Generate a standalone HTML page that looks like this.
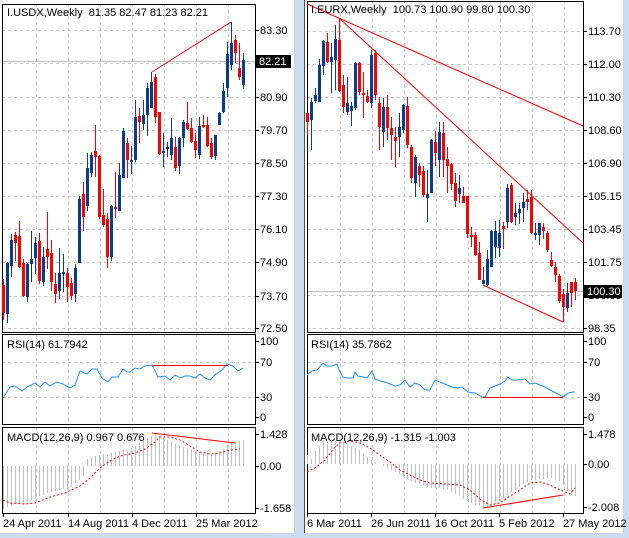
<!DOCTYPE html>
<html><head><meta charset="utf-8">
<style>
html,body{margin:0;padding:0;background:#c9dcf0;}
svg{display:block}
text{font-family:"Liberation Sans","DejaVu Sans",sans-serif;font-size:11px;fill:#000}
</style></head>
<body>
<svg id="s" width="629" height="538" xmlns="http://www.w3.org/2000/svg"></svg>
<script>
var s='';
function R(x,y,w,h,f,st){s+='<rect x="'+x+'" y="'+y+'" width="'+w+'" height="'+h+'" fill="'+f+'"'+(st?' stroke="'+st+'" shape-rendering="crispEdges"':'')+'/>';}
function L(x1,y1,x2,y2,c,d,w){s+='<line x1="'+x1+'" y1="'+y1+'" x2="'+x2+'" y2="'+y2+'" stroke="'+c+'" stroke-width="'+(w||1)+'"'+(d?' stroke-dasharray="'+d+'"':'')+'/>';}
function T(x,y,t,a,c){s+='<text x="'+x+'" y="'+y+'"'+(a?' text-anchor="'+a+'"':'')+(c?' style="fill:'+c+'"':'')+'>'+t+'</text>';}
function P(pts,c,d,w){s+='<polyline fill="none" points="'+pts.map(function(p){return p.join(',')}).join(' ')+'" stroke="'+c+'" stroke-width="'+(w||1)+'"'+(d?' stroke-dasharray="'+d+'"':'')+'/>';}
var G='#c8c8c8',DS='3,3',RED='#ff0000',BLU='#0a3c96';
// backgrounds
R(0,0,629,538,'#c9dcf0');
R(0,0,294,533,'#ffffff');
R(304,0,319,533,'#ffffff');
L(294.5,0,294.5,533,'#d0d0d0');L(623.5,0,623.5,533,'#d0d0d0');L(304.5,0,304.5,533,'#505050');
function panes(x0,x1,top,hl,vl,labels,dates,dx){
  // main
  hl.forEach(function(y){L(x0,y+.5,x1,y+.5,G,DS);});
  vl.forEach(function(x){L(x+.5,top,x+.5,332,G,DS);L(x+.5,334,x+.5,424,G,DS);L(x+.5,427,x+.5,513,G,DS);});
  L(x0,362.5,x1,362.5,G,DS);L(x0,397.5,x1,397.5,G,DS);
  R(x0+.5,top+.5,x1-x0,332-top,'none','#000');
  R(x0+.5,334.5,x1-x0,90,'none','#000');
  R(x0+.5,427.5,x1-x0,86,'none','#000');
  labels.forEach(function(l){L(x1+1,l[0]+.5,x1+4,l[0]+.5,'#000');T(x1+5,l[0]+4,l[1]);});
  dates.forEach(function(d){L(d[0]+.5,513,d[0]+.5,517,'#000');T(d[0],527,d[1]);});
}
panes(2,255,4,[30,63,97,130,163,196,229,262,296,328],[36,68,100,132,164,196,228],
 [[30,'83.30'],[63,'82.10'],[97,'80.90'],[130,'79.70'],[163,'78.50'],[196,'77.30'],[229,'76.10'],[262,'74.90'],[296,'73.70'],[328,'72.50'],
  [341,'100'],[362,'70'],[397,'30'],[417,'0'],[434,'1.428'],[466,'0.00'],[508,'-1.658']],
 [[3,'24 Apr 2011'],[68,'14 Aug 2011'],[132,'4 Dec 2011'],[196,'25 Mar 2012']]);
panes(307,583,1,[31,64,97,130,163,196,229,262,295,328],[340,372,404,436,468,500,532,564],
 [[31,'113.70'],[64,'112.00'],[97,'110.30'],[130,'108.60'],[163,'106.90'],[196,'105.15'],[229,'103.45'],[262,'101.75'],[295,'100.05'],[328,'98.35'],
  [341,'100'],[362,'70'],[397,'30'],[417,'0'],[434,'1.478'],[464,'0.00'],[507,'-2.008']],
 [[307,'6 Mar 2011'],[371,'26 Jun 2011'],[435,'16 Oct 2011'],[499,'5 Feb 2012'],[563,'27 May 2012']]);
// current price lines
L(3,61.5,255,61.5,'#c0c0c0');L(308,291.5,583,291.5,'#c0c0c0');
// candles: [x, wickTop, wickBot, bodyTop, bodyBot, color]
var lc=[[3,279,320,285,313,'r'],[7,262,323,263,314,'b'],[11,234,277,240,266,'b'],[15,232,261,235,243,'r'],[19,221,268,236,267,'r'],[23,259,297,263,296,'r'],[27,263,302,264,297,'b'],[31,231,282,259,264,'b'],[35,237,274,243,258,'b'],[39,233,284,241,281,'r'],[43,247,286,257,282,'b'],[47,212,269,249,257,'r'],[51,240,291,253,282,'r'],[55,273,303,284,294,'r'],[59,248,299,273,291,'b'],[63,254,292,272,274,'b'],[67,268,302,273,287,'r'],[71,278,300,283,296,'r'],[75,264,302,268,294,'b'],[79,196,263,199,263,'b'],[83,182,231,194,217,'r'],[87,153,211,168,206,'b'],[91,152,177,155,173,'b'],[95,125,177,151,157,'r'],[99,155,219,156,217,'r'],[103,189,227,215,225,'r'],[107,213,268,219,257,'r'],[111,205,261,206,257,'b'],[115,172,218,207,209,'r'],[119,163,211,175,211,'b'],[123,128,178,131,178,'b'],[127,138,178,143,160,'r'],[131,146,174,160,162,'b'],[135,100,162,117,160,'b'],[139,108,143,116,122,'r'],[143,100,130,115,124,'b'],[147,83,136,88,115,'b'],[151,72,108,82,108,'b'],[155,74,123,77,117,'r'],[159,112,155,112,154,'r'],[163,133,167,151,153,'b'],[167,142,157,147,149,'b'],[171,118,160,138,155,'b'],[175,137,171,147,168,'r'],[179,137,174,138,166,'b'],[183,120,147,122,138,'b'],[187,102,130,123,129,'r'],[191,118,143,128,142,'r'],[195,133,158,141,150,'r'],[199,117,159,126,155,'b'],[203,115,128,125,127,'r'],[207,117,147,125,146,'r'],[211,138,159,143,157,'r'],[215,135,160,135,156,'b'],[219,112,125,113,125,'b'],[223,83,113,91,112,'b'],[227,42,97,54,88,'b'],[231,22,70,43,65,'b'],[235,35,63,40,53,'r'],[239,43,80,68,77,'r'],[243,53,89,60,85,'b']];
var rc=[[307,112,135,113,122,'r'],[311,98,150,102,120,'b'],[315,88,103,95,101,'b'],[319,59,102,65,102,'b'],[323,40,75,41,66,'b'],[327,33,63,42,62,'r'],[331,43,93,57,62,'b'],[335,25,90,39,60,'b'],[339,18,92,40,91,'r'],[343,75,113,85,107,'r'],[347,77,115,103,112,'b'],[351,102,126,106,111,'b'],[355,62,110,63,108,'b'],[359,62,95,63,92,'r'],[363,72,118,93,95,'r'],[367,90,103,96,102,'r'],[371,50,108,55,103,'b'],[375,50,100,53,95,'r'],[379,97,150,103,127,'r'],[383,98,147,107,132,'b'],[387,95,140,107,128,'r'],[391,117,160,128,135,'r'],[395,127,167,137,141,'r'],[399,113,157,127,137,'b'],[403,104,133,105,130,'b'],[407,97,148,106,145,'r'],[411,145,183,147,178,'r'],[415,155,197,157,183,'b'],[419,163,187,166,175,'r'],[423,166,197,171,195,'r'],[427,170,222,194,198,'b'],[431,139,193,140,193,'b'],[435,131,166,142,153,'r'],[439,122,177,132,160,'b'],[443,122,177,133,160,'r'],[447,147,193,159,166,'r'],[451,163,190,164,184,'r'],[455,173,207,183,201,'r'],[459,175,203,188,194,'b'],[463,187,203,196,203,'r'],[467,196,238,196,234,'r'],[471,227,247,235,237,'r'],[475,232,256,235,255,'r'],[479,242,280,253,280,'r'],[483,267,284,280,284,'b'],[487,250,286,259,285,'b'],[491,230,267,231,267,'b'],[495,221,258,231,247,'b'],[499,220,257,233,248,'b'],[503,222,249,226,229,'r'],[507,184,228,188,222,'b'],[511,183,223,185,222,'r'],[515,203,225,213,217,'b'],[519,203,224,209,213,'b'],[523,193,222,202,208,'b'],[527,190,210,199,202,'r'],[531,190,234,197,233,'r'],[535,223,240,233,235,'b'],[539,223,245,223,235,'b'],[543,223,239,227,231,'r'],[547,231,252,233,250,'r'],[551,252,267,260,266,'r'],[555,262,282,267,275,'r'],[559,274,303,276,301,'r'],[563,289,322,294,307,'r'],[567,283,312,293,308,'b'],[571,282,307,282,293,'r'],[575,278,300,282,291,'r']];
function candles(a){a.forEach(function(c){var col=c[5]=='r'?RED:BLU;
  s+='<rect x="'+(c[0])+'" y="'+c[1]+'" width="1" height="'+(c[2]-c[1])+'" fill="'+col+'"/>';
  if(c[5]=='r'){s+='<rect x="'+(c[0]-.5)+'" y="'+(c[3]+.5)+'" width="2" height="'+Math.max(1,c[4]-c[3]-1)+'" fill="none" stroke="'+RED+'"/>';}
  else s+='<rect x="'+(c[0]-1)+'" y="'+c[3]+'" width="3" height="'+Math.max(1,c[4]-c[3])+'" fill="'+BLU+'"/>';
});}
candles(lc);candles(rc);
// trendlines
L(152,72,231,22,RED);
L(307,4,583,126,RED);L(339,18,583,243,RED);L(483,285,563,322,RED);
// price tags
R(256,55,35,13,'#000');T(259,65,'82.21','', '#fff');
R(584,285,38,13,'#000');T(587,295,'100.30','','#fff');
// titles
T(7,16,'I.USDX,Weekly&#160;&#160;81.35 82.47 81.23 82.21');
T(311,13,'I.EURX,Weekly&#160;&#160;100.73 100.90 99.80 100.30');
T(7,348,'RSI(14) 61.7942');T(311,348,'RSI(14) 35.7862');
T(7,441,'MACD(12,26,9) 0.967 0.676');T(311,441,'MACD(12,26,9) -1.315 -1.003');
// RSI
var RB='#1e90ff';
P([[3,398],[10,387],[15,386],[22,391],[27,387],[35,383],[40,387],[45,382],[50,386],[57,382],[63,384],[70,388],[75,385],[80,371],[87,374],[92,369],[97,369],[102,378],[108,382],[112,377],[118,377],[123,369],[127,372],[130,372],[135,368],[140,369],[145,366],[152,365],[158,377],[165,376],[170,380],[175,375],[180,378],[185,376],[190,376],[195,378],[200,374],[205,378],[210,380],[215,375],[222,370],[227,364],[233,366],[238,371],[243,368]],RB);
L(152,365.5,228,365.5,RED);
P([[307,375],[312,371],[317,370],[323,363],[327,366],[332,366],[337,364],[340,372],[343,377],[348,378],[353,378],[355,372],[358,376],[363,377],[367,378],[372,371],[375,379],[380,381],[385,382],[390,384],[395,386],[400,385],[405,380],[410,387],[415,383],[420,385],[425,390],[430,390],[435,380],[440,382],[445,384],[452,387],[458,388],[462,387],[468,392],[475,393],[482,397],[485,397],[490,388],[495,386],[500,384],[505,381],[508,377],[512,380],[518,380],[525,379],[530,384],[535,383],[540,385],[545,387],[550,390],[558,394],[563,397],[568,393],[573,392],[575,392]],RB);
L(483,397.5,563,397.5,RED);
// MACD histograms
function interp(k,x){for(var i=0;i<k.length-1;i++){if(x>=k[i][0]&&x<=k[i+1][0]){var t=(x-k[i][0])/(k[i+1][0]-k[i][0]);return k[i][1]+t*(k[i+1][1]-k[i][1]);}}return k[x<k[0][0]?0:k.length-1][1];}
function hist(x0,n,z,k){for(var i=0;i<n;i++){var x=x0+4*i,v=Math.round(interp(k,x));L(x+.5,z,x+.5,v,'#c0c0c0');}}
hist(3,61,466,[[3,509],[10,505],[30,500],[50,492],[70,488],[83,476],[87,459],[95,456],[110,453],[130,449],[140,442],[155,434],[160,437],[180,446],[200,452],[210,454],[220,451],[230,443],[243,440]]);
P([[3,500],[10,503],[25,504],[35,503],[50,497],[65,493],[80,486],[90,478],[100,468],[110,461],[120,456],[135,453],[145,449],[155,442],[160,437],[170,437],[180,440],[190,446],[200,452],[210,454],[220,453],[230,450],[240,449]],RED,'2,2');
L(152,433,235,443,RED);
hist(307,68,464,[[307,455],[311,459],[315,451],[320,445],[323,440],[340,441],[350,446],[360,450],[370,460],[380,464],[390,469],[400,475],[410,481],[420,484],[430,488],[440,488],[450,491],[460,497],[470,503],[485,508],[495,504],[510,493],[520,486],[530,480],[550,478],[560,481],[565,488],[570,495],[575,496]]);
P([[307,472],[315,468],[325,460],[335,447],[340,443],[350,441],[360,443],[370,448],[380,455],[390,462],[400,470],[410,475],[420,480],[430,483],[445,484],[460,485],[470,490],[480,499],[490,505],[500,503],[510,496],[520,490],[530,483],[540,482],[550,485],[560,490],[570,494],[575,488]],RED,'2,2');
L(483,508,563,495,RED);
document.getElementById('s').innerHTML=s;
</script>
</body></html>
